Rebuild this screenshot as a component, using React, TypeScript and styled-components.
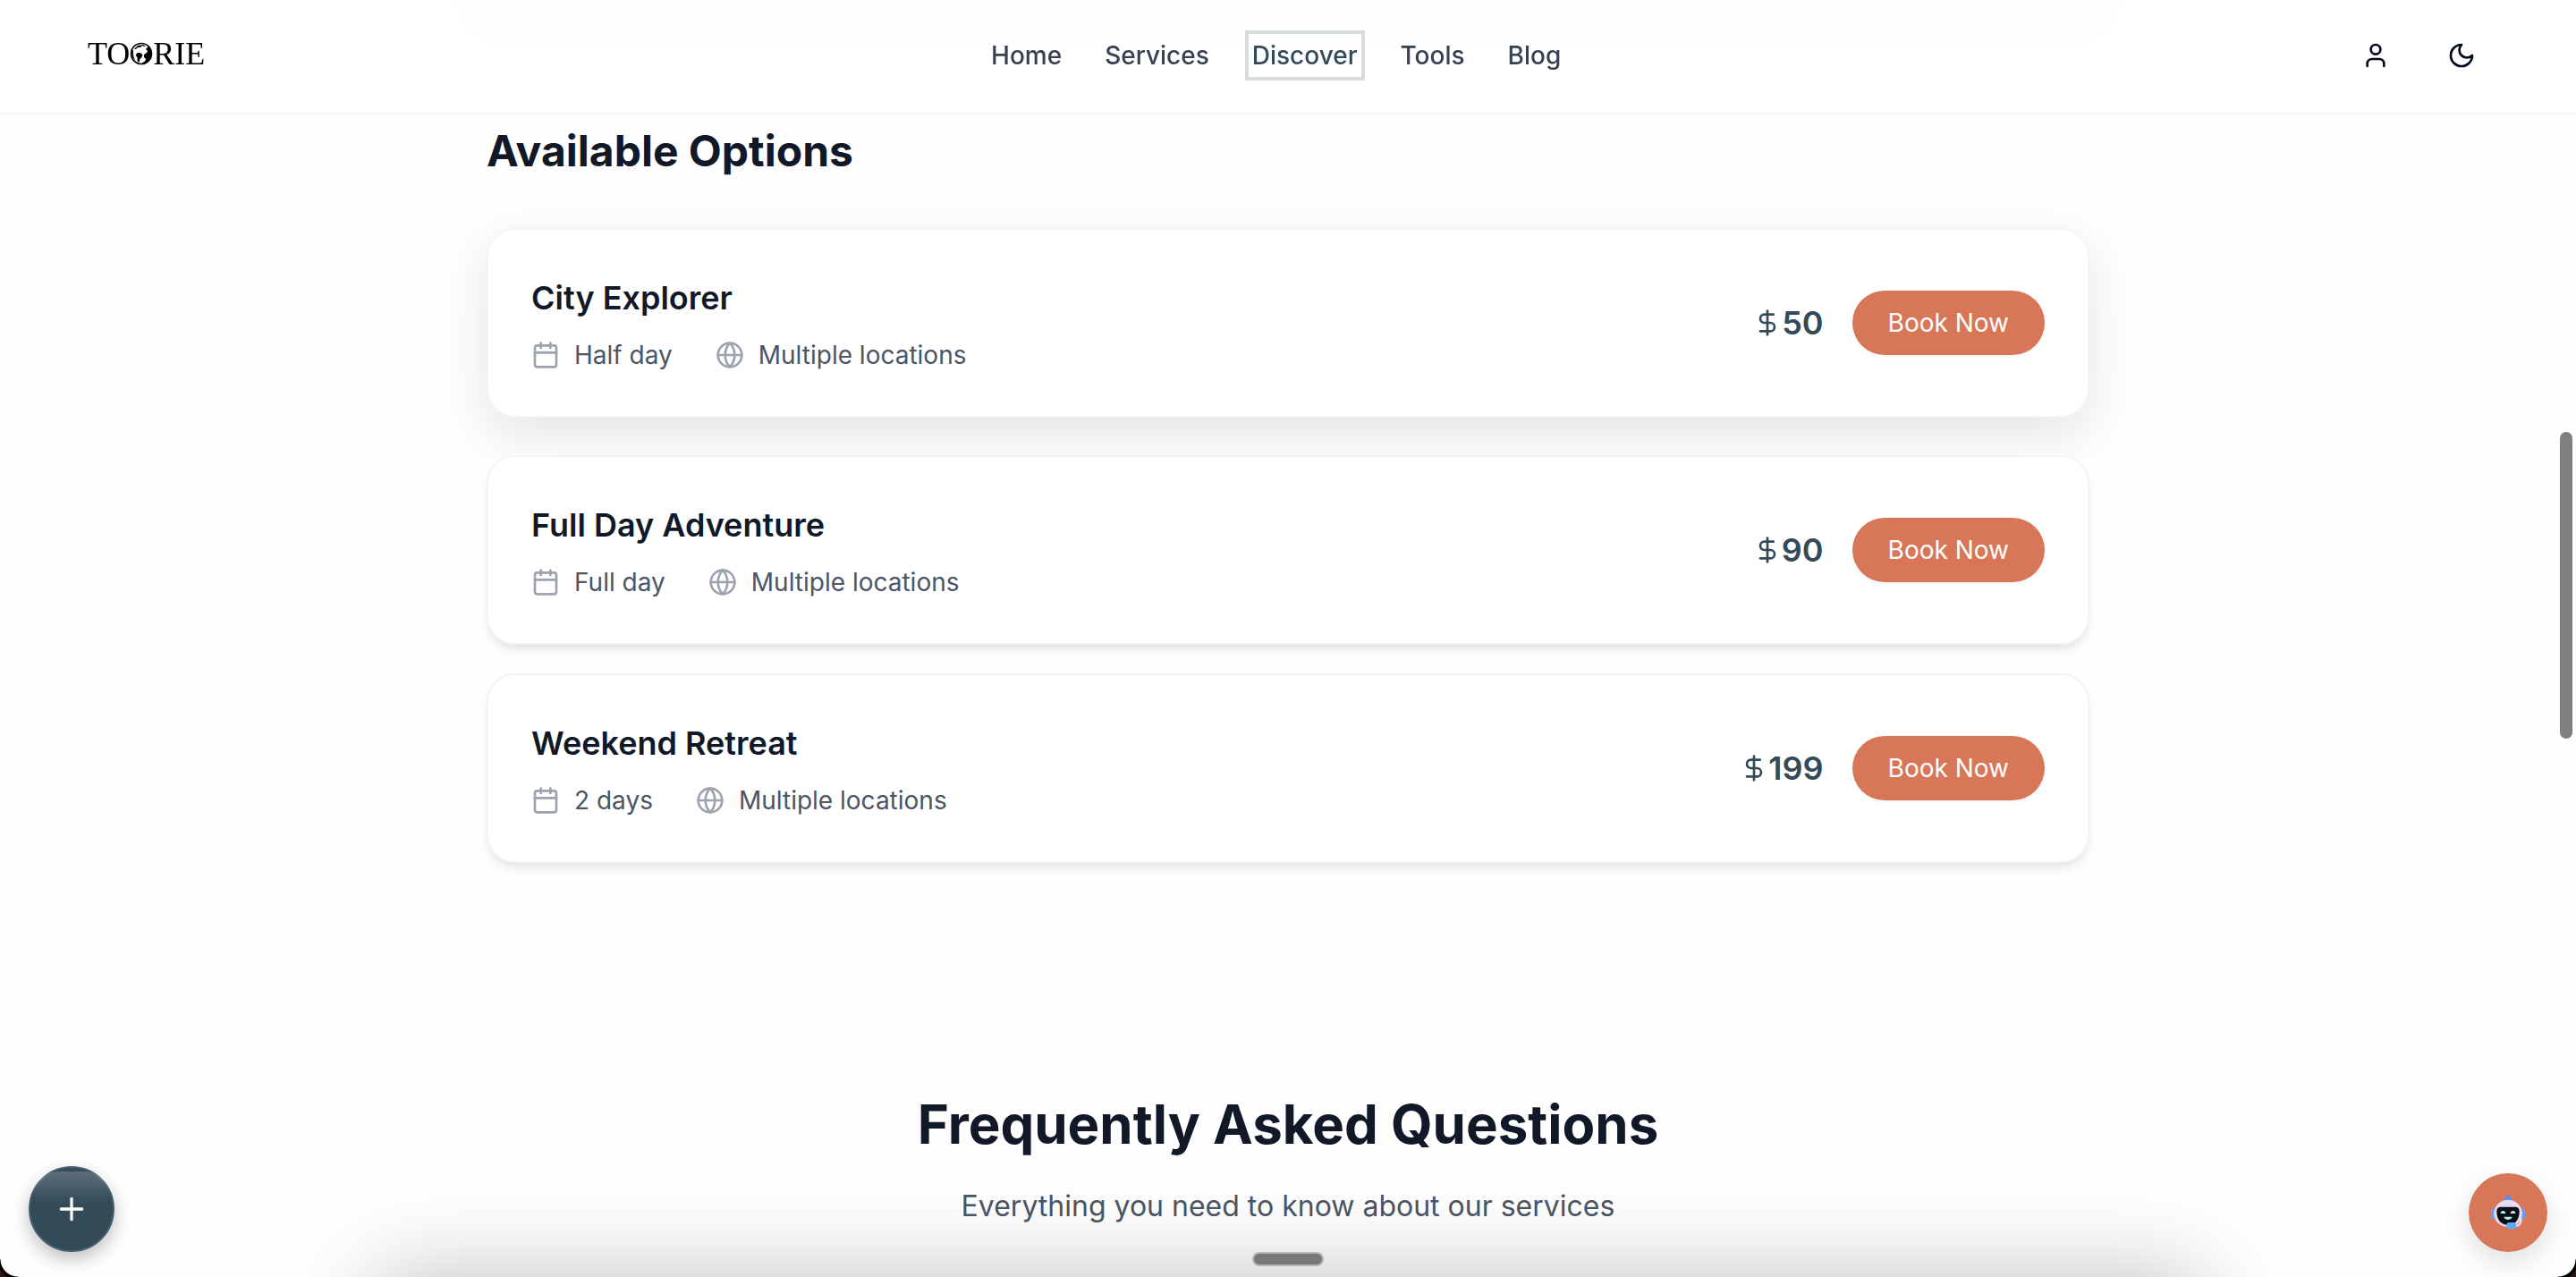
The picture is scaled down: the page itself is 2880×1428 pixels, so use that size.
import React from "react";
import styled, { createGlobalStyle, css } from "styled-components";
import { User, Calendar, Globe, DollarSign, Plus } from "lucide-react";

const GlobalStyle = createGlobalStyle`
  *, *::before, *::after { box-sizing: border-box; }
  html, body { margin: 0; }
  html { height: 100%; overflow: hidden; background: #fefefe; }
  body { height: 100%; overflow: hidden; font-family: Inter, "Liberation Sans", sans-serif; color: #111827; }
  h1, h2, h3, p, ul { margin: 0; padding: 0; }
  button { font: inherit; border: 0; padding: 0; cursor: pointer; }
`;

const Header = styled.header`
  position: fixed;
  inset: 0 0 auto 0;
  z-index: 10;
  height: 128px;
  padding: 0 96px 2px;
  display: flex;
  align-items: center;
  justify-content: space-between;
  border-bottom: 2px solid #f5f6f7;
  box-shadow: 0 2px 4px rgba(0, 0, 0, 0.02);
  background: rgba(255, 255, 255, 0.5);
`;

const Logo = styled.a`
  display: flex;
  align-items: center;
  padding: 0 0 4px 2px;
  color: #000;
  font-family: "Liberation Serif", serif;
  font-size: 36px;
  line-height: 40px;
  text-decoration: none;
`;

const NavList = styled.ul`
  display: flex;
  align-items: center;
  gap: 32px;
  list-style: none;
`;

const NavLink = styled.a<{ $active?: boolean }>`
  display: block;
  padding: 4px;
  border: 4px solid ${(p) => (p.$active ? "#d6dbde" : "transparent")};
  color: ${(p) => (p.$active ? "#334a58" : "#374151")};
  font-size: 28px;
  font-weight: 500;
  line-height: 40px;
  text-decoration: none;
`;

const HeaderActions = styled.div`
  display: flex;
  gap: 32px;
`;

const IconButton = styled.button`
  width: 64px;
  height: 64px;
  display: grid;
  place-items: center;
  background: none;
  color: #020817;
`;

const Page = styled.main`
  padding: 0 48px;
`;

const PreviousPanel = styled.div`
  max-width: 1792px;
  height: 0;
  margin: 0 auto;
  box-shadow: 0 0 60px 10px rgba(0, 0, 0, 0.07);
`;

const Options = styled.section`
  max-width: 1792px;
  margin: 0 auto;
  padding-top: 137px;
`;

const SectionTitle = styled.h2`
  font-size: 48px;
  font-weight: 700;
  line-height: 64px;
`;

const CardList = styled.div`
  display: grid;
  gap: 32px;
  margin-top: 64px;
`;

const Card = styled.article<{ $raised?: boolean }>`
  position: relative;
  display: flex;
  align-items: center;
  justify-content: space-between;
  padding: 48px;
  border: 2px solid #f3f4f6;
  border-radius: 32px;
  background: #fff;
  box-shadow: 0 8px 12px -2px rgba(0, 0, 0, 0.08), 0 4px 8px -4px rgba(0, 0, 0, 0.08);
  ${(p) =>
    p.$raised &&
    css`
      transform: translateY(-10px);
      box-shadow: 0 20px 60px rgba(0, 0, 0, 0.1);
    `}
`;

const CardTitle = styled.h3`
  font-size: 36px;
  font-weight: 600;
  line-height: 56px;
`;

const Facts = styled.div`
  display: flex;
  gap: 48px;
  margin-top: 16px;
`;

const Fact = styled.span`
  display: flex;
  align-items: center;
  gap: 16px;
  color: #4b5563;
  font-size: 28px;
  line-height: 40px;
  svg { color: #9ca3af; }
`;

const Purchase = styled.div`
  display: flex;
  align-items: center;
  gap: 32px;
`;

const Price = styled.span`
  display: flex;
  align-items: center;
  color: #334a58;
  font-size: 36px;
  font-weight: 600;
  line-height: 56px;
`;

const BookButton = styled.button`
  height: 72px;
  padding: 0 40px;
  border-radius: 36px;
  background: #d87658;
  color: #fff;
  font-size: 28px;
  line-height: 40px;
  box-shadow: 0 2px 4px rgba(0, 0, 0, 0.05);
`;

const Faq = styled.section`
  margin-top: 256px;
  text-align: center;
`;

const FaqTitle = styled.h2`
  font-size: 60px;
  font-weight: 700;
  line-height: 72px;
`;

const FaqLead = styled.p`
  margin-top: 32px;
  color: #4b5563;
  font-size: 32px;
  line-height: 48px;
`;

const Dock = styled.div`
  position: fixed;
  bottom: -120px;
  left: 416px;
  right: 416px;
  height: 120px;
  border-radius: 40px;
  box-shadow: 0 0 100px rgba(0, 0, 0, 0.25);
`;

const DockHandle = styled.button`
  position: fixed;
  bottom: 12px;
  left: calc(50% - 40px);
  width: 80px;
  height: 16px;
  border: 2px solid #b5b5b5;
  border-radius: 8px;
  background: #777;
`;

const AddButton = styled.button`
  position: fixed;
  left: 32px;
  bottom: 28px;
  width: 96px;
  height: 96px;
  display: grid;
  place-items: center;
  border: 2px solid #48606f;
  border-radius: 50%;
  background: #334a58;
  color: #fff;
  box-shadow: 0 8px 20px rgba(0, 0, 0, 0.25);
  &::before {
    content: "";
    position: absolute;
    inset: 4px 4px 52px;
    border-radius: 42px 42px 12px 12px;
    background: linear-gradient(rgba(255, 255, 255, 0.2), rgba(255, 255, 255, 0));
  }
`;

const ChatButton = styled.button`
  position: fixed;
  right: 32px;
  bottom: 28px;
  width: 88px;
  height: 88px;
  display: grid;
  place-items: center;
  border-radius: 50%;
  background: #d87658;
  box-shadow: 0 12px 32px rgba(0, 0, 0, 0.12);
`;

const ScrollThumb = styled.div`
  position: fixed;
  right: 4px;
  top: 483px;
  width: 14px;
  height: 343px;
  border-radius: 7px;
  background: #7f7f7f;
`;

const Corner = styled.div<{ $side: "left" | "right" }>`
  position: fixed;
  bottom: 0;
  ${(p) => p.$side}: 0;
  width: 20px;
  height: 20px;
  background: radial-gradient(
    circle at ${(p) => (p.$side === "left" ? "100%" : "0")} 0,
    transparent 19px,
    #000 20px,
    #000 22px,
    #3a1214 24px
  );
`;

const LogoGlobe = () => (
  <svg width="26" height="26" viewBox="0 0 26 26" aria-hidden="true">
    <circle cx="13" cy="13" r="11.5" fill="#fff" stroke="#000" strokeWidth="1.6" />
    <path d="M20 4c6 5 6 13 0 18-2 1.500-5 2-7 2 3-1.500 5-3 5-5l-2-2v-3l3-2 1-2-2-2 2-2z" fill="#000" />
    <path d="M5 8l4-4 6-1 3 2-2 0-2-1-2 2-3 0-2 2zM8.500 12l3 0 3 2-1 3-2 2-1 4-2-2 0-4-2-2z" fill="#000" />
    <path d="M2.500 9c-1 4 0 9 4 12-2-3-3-7-2.500-12z" fill="#000" />
  </svg>
);

const MoonIcon = () => (
  <svg
    width="32"
    height="32"
    viewBox="0 0 24 24"
    fill="none"
    stroke="currentColor"
    strokeWidth="2"
    strokeLinecap="round"
    strokeLinejoin="round"
    aria-hidden="true"
  >
    <path d="M12 3a6 6 0 0 0 9 9 9 9 0 1 1-9-9Z" />
  </svg>
);

const Robot = () => (
  <svg width="38" height="38" viewBox="0 0 36 36" aria-hidden="true">
    <path d="M12 8l3.500-6.500c1-2 4-2 5 0L24 8z" fill="#5c8df6" />
    <rect x="0" y="14" width="7" height="11" rx="3" fill="#6f9cf8" />
    <rect x="29" y="14" width="7" height="11" rx="3" fill="#6f9cf8" />
    <path d="M3 18C4 10 10 4.500 18 4.500s14 5.500 15 13.500c0 9-6 15-15 15S3 27 3 18z" fill="#e6d9f3" />
    <path d="M6 17c0-4 2-5 5-5h14c3 0 5 1 5 5 0 9-5 14-12 14S6 26 6 17z" fill="#0b0c14" />
    <path d="M10 19c0-4 5.500-4 5.500 0zM20.500 19c0-4 5.500-4 5.500 0zM13.500 22.500h9c-1 4-8 4-9 0z" fill="#a9f5ee" />
    <path d="M31.500 24c1 6-2 8-6 8" fill="none" stroke="#efdff0" strokeWidth="2" />
    <rect x="16.500" y="28.500" width="10" height="6.500" rx="2.500" fill="#5aa9fa" />
  </svg>
);

const links = ["Home", "Services", "Discover", "Tools", "Blog"];

const options = [
  { title: "City Explorer", duration: "Half day", price: 50, raised: true },
  { title: "Full Day Adventure", duration: "Full day", price: 90, raised: false },
  { title: "Weekend Retreat", duration: "2 days", price: 199, raised: false },
];

export default function App() {
  return (
    <>
      <GlobalStyle />
      <Header>
        <Logo href="#" aria-label="Toorie">
          <span>TO</span>
          <LogoGlobe />
          <span>RIE</span>
        </Logo>
        <nav>
          <NavList>
            {links.map((label) => (
              <li key={label}>
                <NavLink href="#" $active={label === "Discover"}>{label}</NavLink>
              </li>
            ))}
          </NavList>
        </nav>
        <HeaderActions>
          <IconButton aria-label="Account"><User size={32} /></IconButton>
          <IconButton aria-label="Dark mode"><MoonIcon /></IconButton>
        </HeaderActions>
      </Header>
      <Page>
        <PreviousPanel />
        <Options>
          <SectionTitle>Available Options</SectionTitle>
          <CardList>
            {options.map((o) => (
              <Card key={o.title} $raised={o.raised}>
                <div>
                  <CardTitle>{o.title}</CardTitle>
                  <Facts>
                    <Fact><Calendar size={32} />{o.duration}</Fact>
                    <Fact><Globe size={32} />Multiple locations</Fact>
                  </Facts>
                </div>
                <Purchase>
                  <Price><DollarSign size={32} />{o.price}</Price>
                  <BookButton>Book Now</BookButton>
                </Purchase>
              </Card>
            ))}
          </CardList>
        </Options>
        <Faq>
          <FaqTitle>Frequently Asked Questions</FaqTitle>
          <FaqLead>Everything you need to know about our services</FaqLead>
        </Faq>
      </Page>
      <Dock />
      <DockHandle aria-label="Open dock" />
      <AddButton aria-label="Add"><Plus size={40} /></AddButton>
      <ChatButton aria-label="Chat"><Robot /></ChatButton>
      <ScrollThumb />
      <Corner $side="left" />
      <Corner $side="right" />
    </>
  );
}
